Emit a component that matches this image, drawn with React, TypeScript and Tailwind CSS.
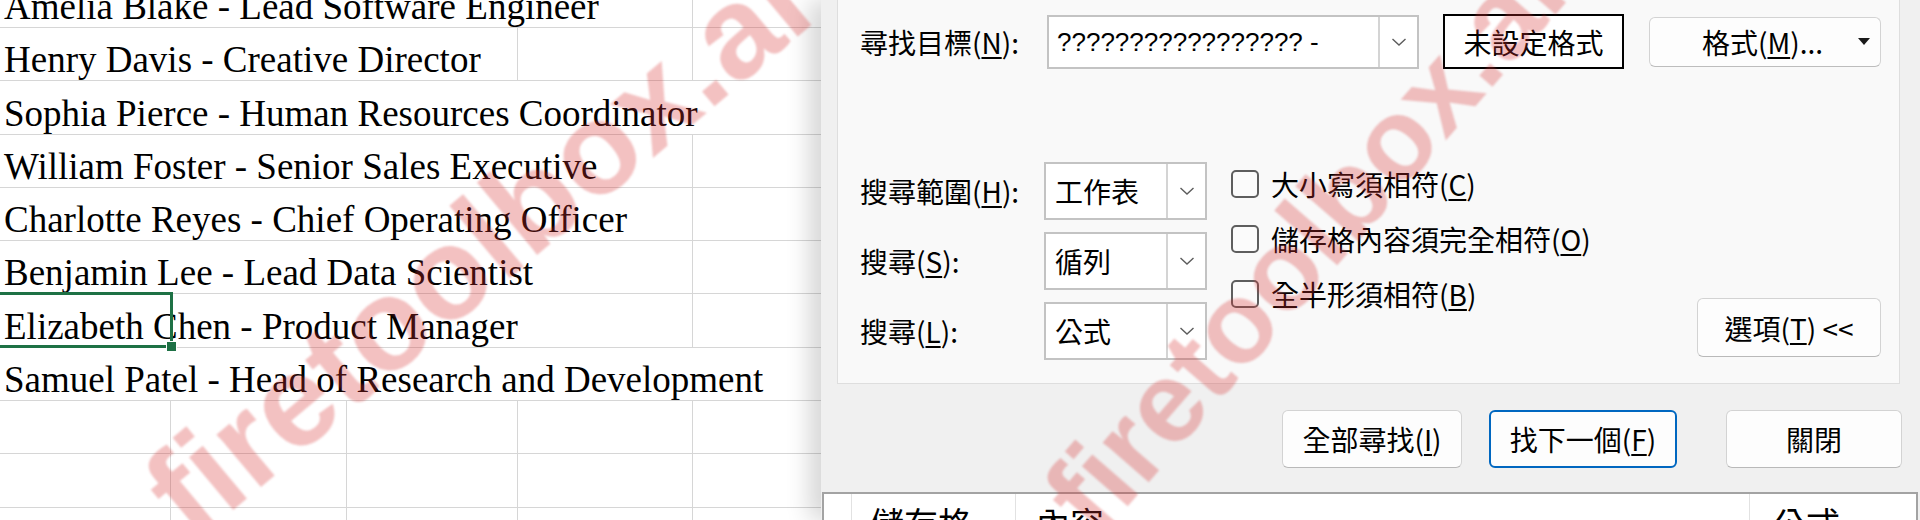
import React from "react";

const COLS = [171, 176, 171, 175, 174];
const GRID = "border-[#d6d6d6]";
const ui = "font-['Noto_Sans_CJK_TC','Noto_Sans',sans-serif]";

const people: [string, number][] = [
  ["Amelia Blake - Lead Software Engineer", 4],
  ["Henry Davis - Creative Director", 3],
  ["Sophia Pierce - Human Resources Coordinator", 5],
  ["William Foster - Senior Sales Executive", 4],
  ["Charlotte Reyes - Chief Operating Officer", 4],
  ["Benjamin Lee - Lead Data Scientist", 4],
  ["Elizabeth Chen - Product Manager", 4],
  ["Samuel Patel - Head of Research and Development", 5],
  ["", 1],
  ["", 1],
  ["", 1],
];

const U = ({ c }: { c: string }) => (
  <span className="underline decoration-[1.5px] underline-offset-[3px]">{c}</span>
);

const Chevron = () => (
  <svg width="16" height="10" viewBox="0 0 16 10">
    <polyline points="1.5,2 8,8 14.5,2" fill="none" stroke="#5c5c5c" strokeWidth="1.4" />
  </svg>
);

function SheetRow({ text, span, first, selected }: { text: string; span: number; first?: boolean; selected?: boolean }) {
  const spanWidth = COLS.slice(0, span).reduce((a, b) => a + b, 0);
  const rest = COLS.slice(span);
  return (
    <div className={`relative flex shrink-0 border-b ${GRID} ${first ? "h-[28px]" : "h-[53.3px]"}`}>
      <div className={`flex h-full shrink-0 items-end border-r ${GRID}`} style={{ width: spanWidth }}>
        <span className="whitespace-nowrap pb-[2px] pl-[4px] font-['Liberation_Serif','Times_New_Roman',serif] text-[37px] leading-none text-black">
          {text}
        </span>
      </div>
      {rest.map((w, i) => (
        <div key={i} className={`h-full shrink-0 border-r ${GRID}`} style={{ width: w }} />
      ))}
      {selected && (
        <div className="absolute -top-[2px] left-0 h-[calc(100%+3px)] w-[173px] border-[3px] border-l-0 border-[#1e7145]">
          <div className="absolute -bottom-[7px] -right-[7px] h-[11px] w-[11px] border border-white bg-[#1e7145]" />
        </div>
      )}
    </div>
  );
}

function Dropdown({ value }: { value: string }) {
  return (
    <div className="flex h-[58px] w-[163px] border-2 border-[#c3c3c3] bg-white">
      <div className="flex flex-1 items-center pl-[9px] text-[28px] leading-none">{value}</div>
      <div className="flex w-[39px] items-center justify-center border-l-2 border-[#d4d4d4]">
        <Chevron />
      </div>
    </div>
  );
}

function Check({ children }: { children: React.ReactNode }) {
  return (
    <div className="flex h-[28px] items-center">
      <div className="h-[28px] w-[28px] rounded-[5px] border-2 border-[#5e5e5e] bg-[#fbfbfb]" />
      <span className="ml-[12px] whitespace-nowrap text-[28px] leading-none">{children}</span>
    </div>
  );
}

function Btn({ w, children, focus }: { w: number; children: React.ReactNode; focus?: boolean }) {
  return (
    <div
      className={`flex h-[58px] items-center justify-center rounded-[6px] bg-[#fdfdfd] text-[28px] leading-none ${
        focus ? "border-2 border-[#0067c0]" : "border border-[#d3d3d3] border-b-[#b9b9b9]"
      }`}
      style={{ width: w }}
    >
      {children}
    </div>
  );
}

export default function App() {
  return (
    <div className={`relative flex h-[520px] w-[1920px] overflow-hidden bg-white text-black ${ui}`}>
      {/* spreadsheet */}
      <div className="flex w-[821px] shrink-0 flex-col overflow-hidden bg-white">
        {people.map(([t, s], i) => (
          <SheetRow key={i} text={t} span={s} first={i === 0} selected={i === 6} />
        ))}
      </div>

      {/* find dialog */}
      <div className="relative z-10 flex flex-1 flex-col bg-[#f0f0f0] shadow-[-12px_0_22px_rgba(0,0,0,0.16)]">
        <div className="ml-[16px] flex h-[384px] w-[1063px] shrink-0 flex-col border-x border-b border-[#dedede] bg-[#f9f9f9] pl-[22px] pr-[18px] pt-[14px]">
          <div className="flex h-[55px] items-center">
            <div className="w-[187px] whitespace-nowrap text-[28px] leading-none">
              尋找目標(<U c="N" />):
            </div>
            <div className="flex h-[54px] w-[372px] border-2 border-[#c3c3c3] bg-white">
              <div className="flex flex-1 items-center pl-[8px] font-['Liberation_Sans',Arial,sans-serif] text-[26px] leading-none">
                ????????????????? -
              </div>
              <div className="flex w-[39px] items-center justify-center border-l-2 border-[#d4d4d4]">
                <Chevron />
              </div>
            </div>
            <div className="ml-[24px] flex h-[55px] w-[181px] items-center justify-center border-2 border-black bg-white text-[28px] leading-none">
              未設定格式
            </div>
            <div className="ml-[25px] flex h-[50px] w-[232px] items-center rounded-[6px] border border-[#d3d3d3] border-b-[#bdbdbd] bg-[#fdfdfd] pl-[52px] pr-[10px] text-[28px] leading-none">
              <span>
                格式(<U c="M" />)...
              </span>
              <svg className="ml-auto" width="12" height="8" viewBox="0 0 12 8">
                <polygon points="0,0 12,0 6,7" fill="#1a1a1a" />
              </svg>
            </div>
          </div>

          <div className="mt-[93px] flex">
            <div className="flex flex-col gap-[12px]">
              {[
                ["搜尋範圍", "H", "工作表"],
                ["搜尋", "S", "循列"],
                ["搜尋", "L", "公式"],
              ].map(([l, k, v]) => (
                <div key={k} className="flex items-center">
                  <div className="w-[184px] whitespace-nowrap text-[28px] leading-none">
                    {l}(<U c={k} />):
                  </div>
                  <Dropdown value={v} />
                </div>
              ))}
            </div>
            <div className="ml-[24px] mt-[8px] flex flex-col gap-[27px]">
              <Check>
                大小寫須相符(<U c="C" />)
              </Check>
              <Check>
                儲存格內容須完全相符(<U c="O" />)
              </Check>
              <Check>
                全半形須相符(<U c="B" />)
              </Check>
            </div>
            <div className="ml-auto mt-[136px] flex h-[59px] w-[184px] items-center justify-center rounded-[6px] border border-[#d3d3d3] border-b-[#b9b9b9] bg-[#fdfdfd] text-[28px] leading-none">
              選項(<U c="T" />)&nbsp;&lt;&lt;
            </div>
          </div>
        </div>

        <div className="mt-[26px] flex shrink-0 justify-end pr-[18px]">
          <Btn w={180}>
            全部尋找(<U c="I" />)
          </Btn>
          <div className="ml-[27px]">
            <Btn w={188} focus>
              找下一個(<U c="F" />)
            </Btn>
          </div>
          <div className="ml-[49px]">
            <Btn w={176}>關閉</Btn>
          </div>
        </div>

        <div className="mb-0 ml-[1px] mr-[2px] mt-[24px] flex flex-1 border-x-2 border-t-2 border-[#a3a3a3] bg-white text-[34px] leading-none">
          <div className="w-[28px] border-r border-[#e2e2e2]" />
          <div className="w-[164px] border-r border-[#e2e2e2] pl-[18px] pt-[12px]">儲存格</div>
          <div className="w-[734px] border-r border-[#e2e2e2] pl-[20px] pt-[12px]">內容</div>
          <div className="flex-1 pl-[22px] pt-[12px]">公式</div>
        </div>
      </div>

      {/* watermark */}
      <div className="pointer-events-none absolute inset-0 z-20 font-['Liberation_Sans',Arial,sans-serif] font-bold blur-[1px]">
        <span className="absolute left-[206px] top-[429px] origin-bottom-left rotate-[-40deg] whitespace-nowrap text-[130px] leading-none text-[rgba(215,50,50,0.3)]">
          firetoolbox.ai
        </span>
        <span className="absolute left-[1111px] top-[438px] origin-bottom-left rotate-[-49deg] whitespace-nowrap text-[115px] leading-none text-[rgba(215,50,50,0.3)]">
          firetoolbox.ai
        </span>
      </div>
    </div>
  );
}
